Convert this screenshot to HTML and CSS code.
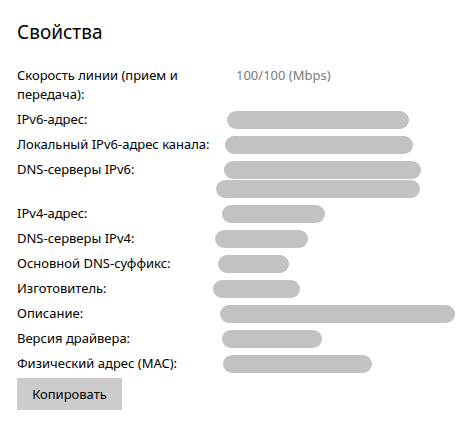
FILE: index.html
```html
<!DOCTYPE html>
<html lang="ru">
<head>
    <meta charset="UTF-8">
    <title>Свойства</title>
    <link rel="stylesheet" href="styles.css">
</head>
<body>
    <div class="props">
        <h2 class="title">Свойства</h2>
        <div class="grid">
            <div class="label">Скорость линии (прием и передача):</div>
            <div class="value"><span class="text">100/100 (Mbps)</span></div>

            <div class="label">IPv6-адрес:</div>
            <div class="value"><div class="blob" style="margin-left: 14px; width: 182px"></div></div>

            <div class="label">Локальный IPv6-адрес канала:</div>
            <div class="value"><div class="blob" style="margin-left: 12px; width: 188px"></div></div>

            <div class="label">DNS-серверы IPv6:</div>
            <div class="value">
                <div class="blob" style="margin-left: 11px; width: 197px"></div>
                <div class="blob" style="margin-left: 3px; width: 204px"></div>
            </div>

            <div class="label">IPv4-адрес:</div>
            <div class="value"><div class="blob" style="margin-left: 9px; width: 103px"></div></div>

            <div class="label">DNS-серверы IPv4:</div>
            <div class="value"><div class="blob" style="margin-left: 2px; width: 93px"></div></div>

            <div class="label">Основной DNS-суффикс:</div>
            <div class="value"><div class="blob" style="margin-left: 5px; width: 71px"></div></div>

            <div class="label">Изготовитель:</div>
            <div class="value"><div class="blob" style="margin-left: 0; width: 87px"></div></div>

            <div class="label">Описание:</div>
            <div class="value"><div class="blob" style="margin-left: 7px; width: 235px"></div></div>

            <div class="label">Версия драйвера:</div>
            <div class="value"><div class="blob" style="margin-left: 9px; width: 100px"></div></div>

            <div class="label">Физический адрес (MAC):</div>
            <div class="value"><div class="blob" style="margin-left: 10px; width: 149px"></div></div>
        </div>
        <button class="copy">Копировать</button>
    </div>
</body>
</html>
```

FILE: styles.css
```css
body {
    margin: 0;
    background-color: #fff;
    color: #000;
    font-family: "Noto Sans", "Open Sans", sans-serif;
}
.props {
    padding: 18px 17px;
}
.title {
    margin: 0 0 20px;
    font-size: 19px;
    font-weight: 400;
    line-height: 28px;
}
.grid {
    display: grid;
    grid-template-columns: 196px 1fr;
    row-gap: 6px;
    font-size: 13px;
    line-height: 19px;
}
.label {
    margin-right: -12px;
}
.value {
    display: flex;
    flex-direction: column;
}
.text {
    padding-left: 23px;
    color: #7a7a7a;
}
.blob {
    height: 18px;
    margin-top: 1px;
    border-radius: 9px;
    background-color: #c2c2c2;
}
.copy {
    margin-top: 5px;
    width: 105px;
    height: 32px;
    border: none;
    background-color: #cccccc;
    color: #000;
    font-family: inherit;
    font-size: 13px;
    padding: 0;
}
```
